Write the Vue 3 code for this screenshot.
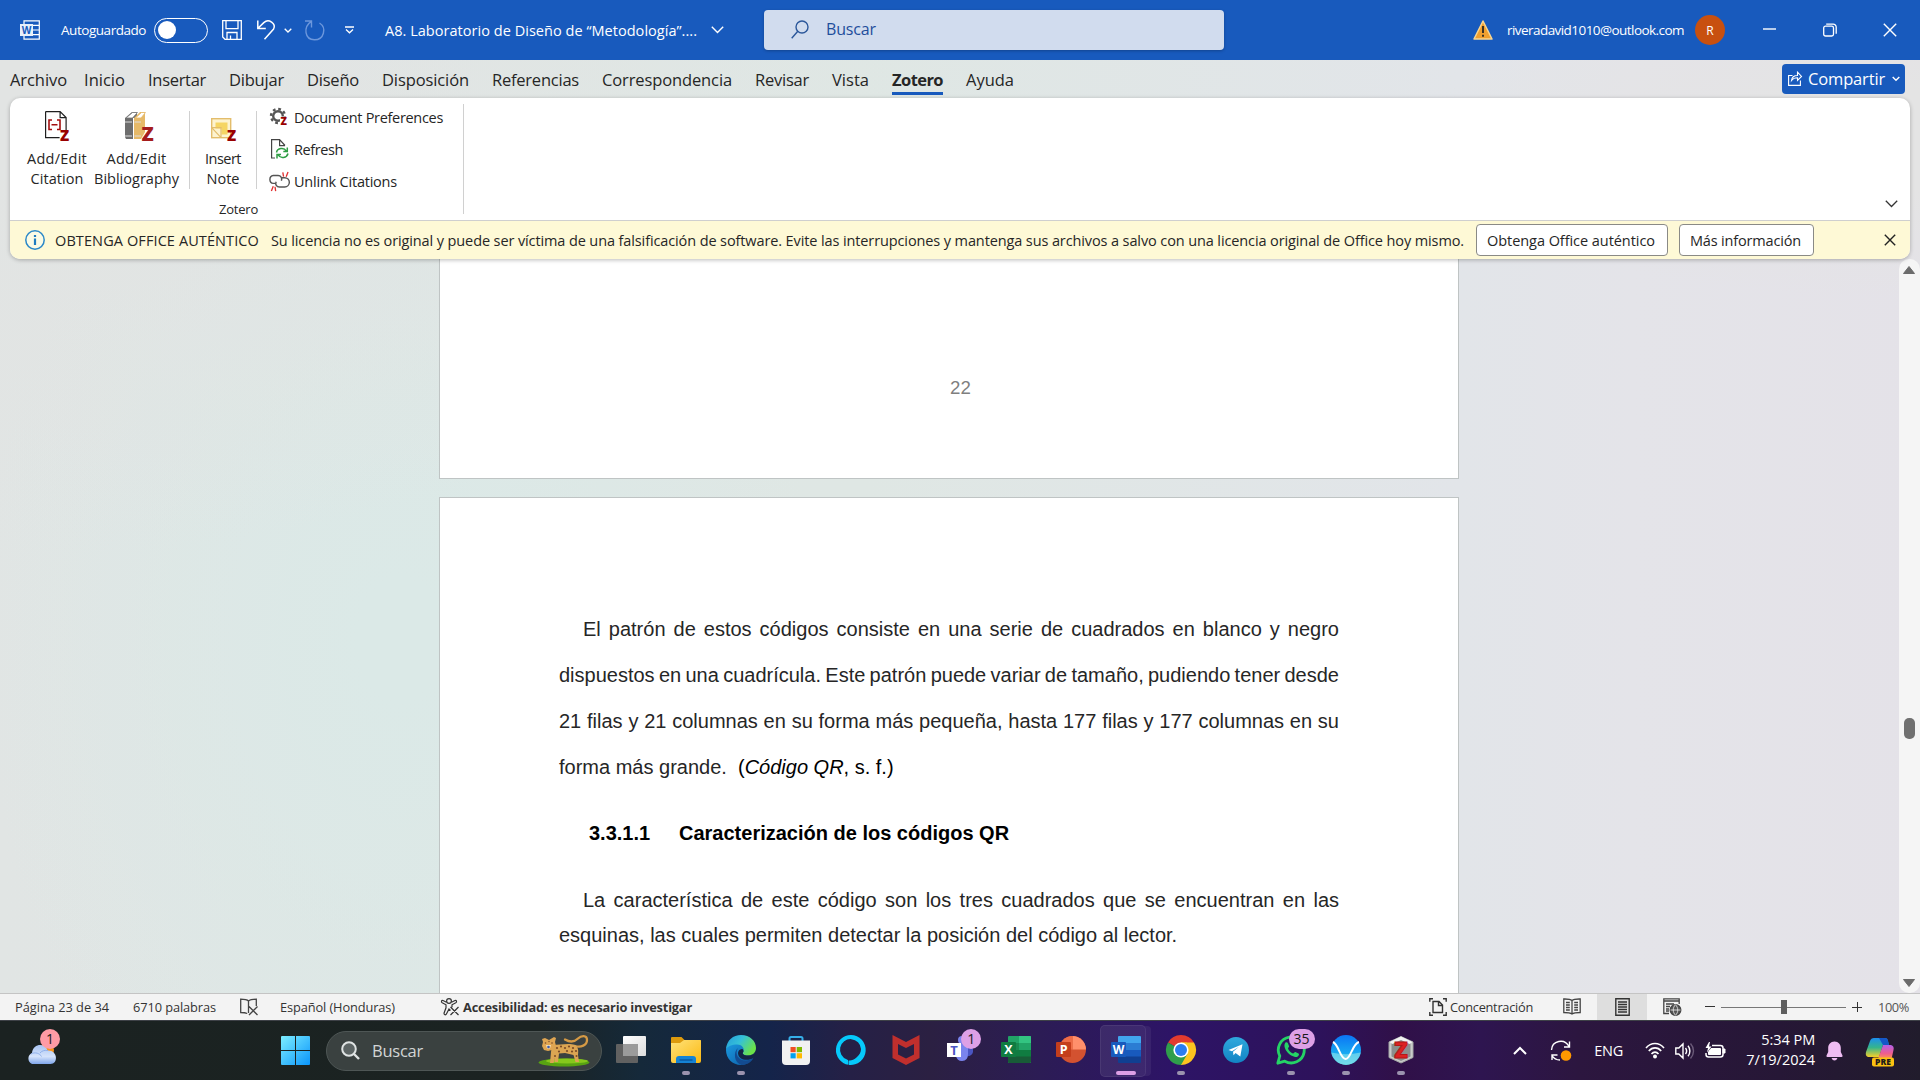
<script setup>
// Sets a text run to a fixed advance width by spreading the difference over its letters.
const vFit = {
  mounted(el, { value }) {
    const natural = el.getBoundingClientRect().width
    const count = el.textContent.length
    el.style.letterSpacing = `${(value - natural) / count}px`
    el.style.width = `${value}px`
  },
}

const tabs = [
  { label: 'Archivo', width: 57, file: true },
  { label: 'Inicio', width: 41 },
  { label: 'Insertar', width: 58 },
  { label: 'Dibujar', width: 55 },
  { label: 'Diseño', width: 52 },
  { label: 'Disposición', width: 87 },
  { label: 'Referencias', width: 87 },
  { label: 'Correspondencia', width: 130 },
  { label: 'Revisar', width: 54 },
  { label: 'Vista', width: 37 },
  { label: 'Zotero', width: 51, active: true },
  { label: 'Ayuda', width: 48 },
]
</script>

<template>
  <div class="screen">
    <header class="titlebar">
      <svg class="word-mark" width="20" height="20" viewBox="0 0 20 20" fill="none" stroke="#fff" stroke-width="1.2">
        <path d="M4 4V.8h15.3v18.4H4V16M13 5.4h6.3M13 10h6.3M13 14.6h6.3" />
        <rect x="0" y="4" width="13" height="12" fill="#e8effa" stroke="none" />
        <text x="6.5" y="13.6" text-anchor="middle" font-size="10" font-weight="700" fill="#185abd" stroke="none">W</text>
      </svg>
      <span v-fit="85" class="autosave">Autoguardado</span>
      <span class="toggle"><i></i></span>
      <svg class="save" width="20" height="20" viewBox="0 0 20 20" fill="none" stroke="#fff" stroke-width="1.3">
        <path d="M.7.7h18.6v18.6H3L.7 17zM4 .7v8h12v-8M5 19v-6.500h10V19M8.500 19v-3.500" />
      </svg>
      <svg class="undo" width="18" height="20" viewBox="0 0 18 20" fill="none" stroke="#fff" stroke-width="1.5">
        <path d="M.8 .5v8h8M1 8.300 6.800 2.600c5-4.500 12.500 1 9.800 6.400L7.500 19.300" />
      </svg>
      <svg class="undo-more" width="8" height="5" viewBox="0 0 8 5" fill="none" stroke="#fff" stroke-width="1.300"><path d="M.7.7 4 4 7.300.7" /></svg>
      <svg class="redo" width="21" height="21" viewBox="0 0 21 21" fill="none" stroke="#6c97dc" stroke-width="1.400">
        <path d="M1 1h6.500v6.500M7.300 1.300C-1 7 .5 19.800 10.500 19.800c9.500 0 12.500-12 5-16.800" />
      </svg>
      <svg class="qat" width="9" height="8" viewBox="0 0 9 8" fill="none" stroke="#fff" stroke-width="1.300"><path d="M0 1h9M1 3.500l3.500 3.300L8 3.500" /></svg>
      <span v-fit="312" class="doc-title">A8. Laboratorio de Diseño de “Metodología”....</span>
      <svg class="title-more" width="13" height="8" viewBox="0 0 13 8" fill="none" stroke="#fff" stroke-width="1.400"><path d="M.8.8l5.700 5.700L12.200.8" /></svg>
      <div class="search">
        <svg width="18" height="19" viewBox="0 0 18 19" fill="none" stroke="#2b579a" stroke-width="1.400">
          <circle cx="11" cy="7" r="6" /><path d="M6.800 11.300.7 18.300" />
        </svg>
        <span v-fit="50">Buscar</span>
      </div>
      <svg class="warning" width="20" height="20" viewBox="0 0 20 20">
        <path d="M10 1 19 19H1z" fill="#f0a030" stroke="#f8d590" stroke-width="1.500" stroke-linejoin="round" />
        <path d="M10 6v7M10 14.800v2" stroke="#3b3224" stroke-width="2" />
      </svg>
      <span v-fit="177" class="account">riveradavid1010@outlook.com</span>
      <span class="avatar">R</span>
      <svg class="win-min" width="13" height="14" viewBox="0 0 13 14" stroke="#fff" stroke-width="1.400"><path d="M0 6h13" /></svg>
      <svg class="win-max" width="14" height="14" viewBox="0 0 14 14" fill="none" stroke="#fff" stroke-width="1.300">
        <rect x=".7" y="3.200" width="9.800" height="9.800" rx="1.800" /><path d="M3.200 1.200h7a3 3 0 0 1 3 3v6.500" />
      </svg>
      <svg class="win-close" width="14" height="14" viewBox="0 0 14 14" stroke="#fff" stroke-width="1.400"><path d="M.8.8l12.400 12.400M13.200.8.8 13.200" /></svg>
    </header>

    <nav class="tabs">
      <span v-for="tab in tabs" :key="tab.label" class="tab" :class="{ active: tab.active, file: tab.file }">
        <span v-fit="tab.width">{{ tab.label }}</span>
      </span>
      <button class="share">
        <svg width="14" height="15" viewBox="0 0 14 15" fill="none" stroke="#fff" stroke-width="1.100">
          <path d="M4.500 4.500H.6v9.900h11.800V9.500M3.500 9.500c.5-4 3-5 6-5V1.200l4 4.300-4 4V6.800c-3 0-4.500.7-6 2.700z" />
        </svg>
        <span v-fit="77">Compartir</span>
        <svg class="share-more" width="8" height="6" viewBox="0 0 8 6" fill="none" stroke="#fff" stroke-width="1.400"><path d="M.7 1 4 4.300 7.300 1" /></svg>
      </button>
    </nav>

    <section class="ribbon-card">
      <div class="ribbon">
        <div class="group">
          <div class="commands">
            <div class="big cite">
              <svg width="26" height="32" viewBox="0 0 26 32" fill="none">
                <path d="M1.600 1.600h14.500l6 6V20M1.600 1.600v26h14M16.100 1.600v6h6" stroke="#1f1f1f" stroke-width="1.200" />
                <path d="M8 10H5v9.500h3M13 10h3v9.500h-3M7.500 14.800h6" stroke="#a30f0f" stroke-width="1.600" />
                <text x="16" y="31" font-size="15" font-weight="800" fill="#990000">Z</text>
              </svg>
              <span v-fit="60">Add/Edit</span><span v-fit="53">Citation</span>
            </div>
            <div class="big biblio">
              <svg width="28" height="32" viewBox="0 0 28 32">
                <path d="M0 8 7 2h5v22l-4 5H1L0 27z" fill="#6d6d6d" />
                <path d="M1 8 7.500 2.500h5L7.500 8z" fill="#fff" stroke="#777" stroke-width=".8" />
                <path d="M9 8l6-6h5v20l-4 7H9z" fill="#e6b968" />
                <path d="M10.500 8l6-5.500h4L16 8z" fill="#fff" stroke="#e6b968" stroke-width=".8" />
                <path d="M0 12h7M0 26h7M9.500 12H16M9.500 26H16" stroke="#ddd" stroke-width="1" />
                <path d="M8.500 8v21" stroke="#fff" stroke-width="1" />
                <text x="16.500" y="31" font-size="20" font-weight="800" fill="#a51c1c">Z</text>
              </svg>
              <span v-fit="60">Add/Edit</span><span v-fit="85">Bibliography</span>
            </div>
            <div class="rule"></div>
            <div class="big note">
              <svg width="25" height="32" viewBox="0 0 25 32" fill="none">
                <rect x=".7" y="8.700" width="19" height="19" fill="#fdf3d0" stroke="#e3bd6c" stroke-width="1.400" />
                <path d="M4.500 12.500h12v12h-6v-6h-6z" fill="#f5d564" />
                <path d="M.7 17.700h9.300v10M.7 17.700l9.300 10" stroke="#e3bd6c" stroke-width="1.200" />
                <text x="16" y="31" font-size="15" font-weight="800" fill="#990000">Z</text>
              </svg>
              <span v-fit="36">Insert</span><span v-fit="33">Note</span>
            </div>
            <div class="rule"></div>
            <div class="small-list">
              <div class="small">
                <svg width="20" height="20" viewBox="0 0 20 20" fill="none">
                  <circle cx="9" cy="9" r="4.800" stroke="#555" stroke-width="2.400" />
                  <circle cx="9" cy="9" r="7" stroke="#555" stroke-width="2.400" stroke-dasharray="2.750 2.750" />
                  <rect x="11" y="9.500" width="7" height="9" fill="#fff" />
                  <text x="11.500" y="18" font-size="10.500" font-weight="800" fill="#990000">Z</text>
                </svg>
                <span v-fit="149">Document Preferences</span>
              </div>
              <div class="small">
                <svg width="20" height="20" viewBox="0 0 20 20" fill="none">
                  <path d="M6 19H2.600V.7h8L16 6.500M10.600.7v6H16" stroke="#444" stroke-width="1.200" />
                  <path d="M7.500 13.500c.8-4.500 7.500-5.500 9.800-1.500M18.300 8.500v4h-4M19 14.500c-1 4.500-7.500 5.500-9.800 1.500M8 19.500v-4h4" stroke="#2f9e44" stroke-width="1.500" />
                </svg>
                <span v-fit="49">Refresh</span>
              </div>
              <div class="small">
                <svg width="21" height="21" viewBox="0 0 21 21" fill="none">
                  <path d="M7 12.500H4.500a4.200 4.200 0 0 1 0-8.300h5c3 0 4.500 3 3.500 5.500M13 6.500h3.500a4.800 4.800 0 0 1 0 9.700H11c-3 0-4.800-2.500-3.500-5.500" stroke="#555" stroke-width="1.500" />
                  <path d="M14.500 1l.8 4.500M20 .5l-2 5M2.500 20.500l2-5M7 20.500 6.300 16" stroke="#e03131" stroke-width="1.400" />
                </svg>
                <span v-fit="103">Unlink Citations</span>
              </div>
            </div>
          </div>
          <div class="group-name"><span v-fit="39">Zotero</span></div>
        </div>
        <div class="group-rule"></div>
        <svg class="collapse" width="13" height="8" viewBox="0 0 13 8" fill="none" stroke="#333" stroke-width="1.300"><path d="M.8.8l5.700 5.700L12.200.8" /></svg>
      </div>
      <div class="notice">
        <svg width="20" height="20" viewBox="0 0 20 20" fill="none">
          <circle cx="10" cy="10" r="9.200" stroke="#2b88c8" stroke-width="1.500" fill="#fafbe6" />
          <path d="M10 8.500v6.500M10 5v2" stroke="#1e7cc0" stroke-width="2.200" />
        </svg>
        <span v-fit="204" class="notice-title">OBTENGA OFFICE AUTÉNTICO</span>
        <span v-fit="1193" class="notice-text">Su licencia no es original y puede ser víctima de una falsificación de software. Evite las interrupciones y mantenga sus archivos a salvo con una licencia original de Office hoy mismo.</span>
        <button class="notice-btn buy"><span v-fit="168">Obtenga Office auténtico</span></button>
        <button class="notice-btn info"><span v-fit="111">Más información</span></button>
        <svg class="notice-close" width="12" height="12" viewBox="0 0 12 12" stroke="#222" stroke-width="1.400"><path d="M.8.8l10.400 10.400M11.200.8.8 11.200" /></svg>
      </div>
    </section>

    <main class="workspace">
      <div class="pages">
        <article class="page page-end"><span class="page-number">22</span></article>
        <article class="page page-next">
          <p class="double">
            <span class="line indent">El patrón de estos códigos consiste en una serie de cuadrados en blanco y negro</span>
            <span class="line tight">dispuestos en una cuadrícula. Este patrón puede variar de tamaño, pudiendo tener desde</span>
            <span class="line">21 filas y 21 columnas en su forma más pequeña, hasta 177 filas y 177 columnas en su</span>
            <span class="line last">forma más grande.&nbsp; <b>(<i>Código QR</i>, s. f.)</b></span>
          </p>
          <h4><span class="number">3.3.1.1</span>Caracterización de los códigos QR</h4>
          <p class="single">
            <span class="line indent">La característica de este código son los tres cuadrados que se encuentran en las</span>
            <span class="line last">esquinas, las cuales permiten detectar la posición del código al lector.</span>
          </p>
        </article>
      </div>
      <div class="scrollbar">
        <svg width="12" height="8" viewBox="0 0 12 8"><path d="M6 .5 11.500 7.500H.5z" fill="#6b6b6b" stroke="#6b6b6b" stroke-linejoin="round" /></svg>
        <i class="thumb"></i>
        <svg width="12" height="8" viewBox="0 0 12 8"><path d="M6 7.500 11.500.5H.5z" fill="#6b6b6b" stroke="#6b6b6b" stroke-linejoin="round" /></svg>
      </div>
    </main>

    <footer class="status">
      <span v-fit="94" class="st-page">Página 23 de 34</span>
      <span v-fit="83" class="st-words">6710 palabras</span>
      <svg class="st-proof" width="18" height="18" viewBox="0 0 18 18" fill="none" stroke="#444" stroke-width="1.300">
        <path d="M8.500 15V3C7 1.500 4 1.200.7 1.200V14.500c3 0 5 .2 6.500 1M8.500 3C10 1.500 13 1.200 16.300 1.200V8M9 8.500l8.500 8.500M17.500 8.500 9 17" />
      </svg>
      <span v-fit="115" class="st-lang">Español (Honduras)</span>
      <svg class="st-acc" width="18" height="18" viewBox="0 0 18 18" fill="none" stroke="#333" stroke-width="1.200">
        <circle cx="8" cy="3" r="2.400" />
        <path d="M5.500 4.300 2 2.500C.5 2-.2 4 1.200 4.800L5 6.800v3L3 15.200c-.3 1.500 1.700 2.200 2.400.8L8 11l1.500 1.500M10.500 4.300 14 2.500c1.500-.5 2.200 1.500.8 2.300L11 6.800v2.500M9.500 9l8 8M17.500 9l-8 8" />
      </svg>
      <span v-fit="229" class="st-acc-text">Accesibilidad: es necesario investigar</span>
      <svg class="st-focus" width="18" height="18" viewBox="0 0 18 18" fill="none" stroke="#333" stroke-width="1.400">
        <path d="M4 .8H.8v3M14 .8h3.200v3M.8 14v3.200H4M17.200 14v3.200H14M4 3.500h6l3.500 3.500v7.500H4zM9.500 3.500v4h4" />
      </svg>
      <span v-fit="83" class="st-focus-text">Concentración</span>
      <svg class="st-read" width="18" height="17" viewBox="0 0 18 17" fill="none" stroke="#444" stroke-width="1.300">
        <path d="M9 2.500v13.500M9 2.500C7 .8 3.500 1 .8 1v13.500c3 0 6.200 0 8.200 1.500 2-1.500 5.200-1.500 8.200-1.500V1C14.500 1 11 .8 9 2.500zM3 4.500h3.800M3 7h3.800M3 9.500h3.800M3 12h3.800M11.200 4.500H15M11.200 7H15M11.200 9.500H15M11.200 12H15" />
      </svg>
      <span class="st-print">
        <svg width="15" height="18" viewBox="0 0 15 18" fill="none" stroke="#333" stroke-width="1.400">
          <path d="M.8.8h13.400v16.400H.8zM3 4h9M3 6.500h9M3 9h9M3 11.500h9M3 14h9" />
        </svg>
      </span>
      <svg class="st-web" width="19" height="18" viewBox="0 0 19 18" fill="none" stroke="#444" stroke-width="1.300">
        <path d="M6 15.500H.8V.8h15.400V6M.8 3h15.400M3 6h8M3 8.500h4M3 11h3M3 13h3" />
        <circle cx="12.500" cy="12" r="5.300" fill="#555" /><path d="M7.500 12h10M12.500 6.700c-3 3-3 7.500 0 10.600 3-3 3-7.500 0-10.600" stroke="#eee" stroke-width=".8" />
      </svg>
      <i class="minus"></i>
      <div class="slider"><i></i></div>
      <i class="plus"></i>
      <span v-fit="31" class="zoom-value">100%</span>
    </footer>

    <div class="taskbar">
      <div class="weather">
        <svg width="32" height="24" viewBox="0 0 32 24">
          <defs><linearGradient id="cloud" x1="0" y1="0" x2="0" y2="1"><stop offset="0" stop-color="#a8c4f2" /><stop offset=".6" stop-color="#d5e3fb" /><stop offset="1" stop-color="#7fa6ea" /></linearGradient></defs>
          <circle cx="22" cy="8" r="7" fill="#f7941d" />
          <path d="M7 22a6 6 0 0 1 0-11C8 1.500 20 .5 22.500 8.500 33 8 33.500 22 25.500 22z" fill="url(#cloud)" />
          <path d="M6 12c4-2.500 9-.5 10.500 2.500M15 11c2-2.500 5-3 8-2.500" fill="none" stroke="#8fb0ea" stroke-width="1" />
        </svg>
        <b class="badge pink">1</b>
      </div>
      <svg class="start" width="29" height="29" viewBox="0 0 29 29">
        <defs><linearGradient id="win" gradientUnits="userSpaceOnUse" x1="0" y1="0" x2="29" y2="29"><stop offset="0" stop-color="#7deeff" /><stop offset="1" stop-color="#0a95fb" /></linearGradient></defs>
        <path d="M0 1q0-1 1-1h13v14H0zM15 0h13q1 0 1 1v13H15zM0 15h14v14H1q-1 0-1-1zM15 15h14v13q0 1-1 1H15z" fill="url(#win)" />
      </svg>
      <div class="tb-search">
        <svg width="19" height="19" viewBox="0 0 19 19" fill="none" stroke="#dfe3e3" stroke-width="2"><circle cx="8" cy="8" r="6.800" fill="#5c6464" /><path d="M13 13l5 5" stroke-width="2.400" /></svg>
        <span v-fit="51">Buscar</span>
        <svg class="leopard" width="52" height="33" viewBox="0 0 52 33">
          <ellipse cx="26" cy="28.500" rx="25.500" ry="4" fill="#58a312" />
          <ellipse cx="29" cy="27" rx="21" ry="2.500" fill="#86c81c" />
          <path d="M37 12c6 2 12-1 12-6 0-5.500-6-4.500-9-1.500-4 4-8 4-13 1" fill="none" stroke="#d59a45" stroke-width="2.300" stroke-linecap="round" />
          <path d="M14 11c8 0 17-2 23 0 3.500 2 3.500 6 3 10l1 7h-3.500l-2-7-8.500-2-6 .5-1 8.500h-3.500l.5-4-1.500 5h-3.500l1-11z" fill="#dba552" />
          <path d="M4 5l3-1 4 2 5-3 2 1-1 4 1 4-4 4-4 1-4-1-2-4 1-4z" fill="#dfa552" />
          <path d="M8 11h5l-1 3.500H9z" fill="#f2dfbc" /><circle cx="10.500" cy="13" r="1.300" fill="#3c5aa8" />
          <g fill="#7a4a27"><circle cx="19" cy="14" r="1.100" /><circle cx="23" cy="12.500" r="1.100" /><circle cx="27" cy="14" r="1.100" /><circle cx="31" cy="12.500" r="1.100" /><circle cx="35" cy="14" r="1.100" /><circle cx="21" cy="17.500" r="1.100" /><circle cx="29" cy="17" r="1.100" /><circle cx="34" cy="17.500" r="1.100" /><circle cx="38" cy="17" r="1.100" /><circle cx="17" cy="22" r="1" /><circle cx="38.500" cy="22" r="1" /><circle cx="7.500" cy="9" r=".8" /><circle cx="14" cy="9" r=".8" /><circle cx="11" cy="7.500" r=".7" /></g>
        </svg>
      </div>

      <ul class="apps">
        <li>
          <svg width="30" height="30" viewBox="0 0 30 30">
            <defs><linearGradient id="tv" x1="0" y1="0" x2="1" y2="1"><stop offset="0" stop-color="#fff" /><stop offset="1" stop-color="#dcdcdc" /></linearGradient></defs>
            <rect x="0" y="9" width="22" height="19" rx="1" fill="#616161" /><rect x="7" y="1" width="23" height="20" rx="1" fill="url(#tv)" /><path d="M7 9h15v12H7z" fill="#9b9b9b" />
          </svg>
        </li>
        <li class="running">
          <svg width="30" height="30" viewBox="0 0 30 30">
            <defs><linearGradient id="folder" x1="0" y1="0" x2="1" y2="1"><stop offset="0" stop-color="#ffe27a" /><stop offset="1" stop-color="#fbb911" /></linearGradient></defs>
            <path d="M0 3q0-1 1-1h9.500l3 3H29q1 0 1 1v7H0z" fill="#dd9a0d" /><path d="M0 8h9l4-3h16q1 0 1 1v20q0 2-2 2H2q-2 0-2-2z" fill="url(#folder)" />
            <path d="M5 28v-4q0-3 3-3h14q3 0 3 3v4z" fill="#1583d4" /><path d="M8.500 25h13" stroke="#0a569e" stroke-width="1.400" />
          </svg>
        </li>
        <li class="running">
          <svg width="30" height="30" viewBox="0 0 30 30">
            <defs>
              <linearGradient id="edge-a" x1="0" y1="0" x2="1" y2=".5"><stop offset="0" stop-color="#249cdc" /><stop offset=".5" stop-color="#35c1d8" /><stop offset="1" stop-color="#6be34a" /></linearGradient>
              <linearGradient id="edge-b" x1="0" y1="0" x2="1" y2="1"><stop offset="0" stop-color="#1b9de2" /><stop offset="1" stop-color="#0c59a4" /></linearGradient>
            </defs>
            <path d="M0 15C0 10 5 6 11 7c5 .5 8 4 7 8l-1 2.500c-1 1.500 1 3 5 3 2.500 0 5-.8 7-2C27 26 21 30 15 30 6.500 30 0 23.500 0 15z" fill="url(#edge-b)" />
            <path d="M0 14C1 5 7 0 15 0c9 0 15 6 15 13 0 5-4 7.500-8 7.500-4 0-6-1.500-5-3 2-3 0-8-6-8C6 9.500 1.500 11.500 0 14z" fill="url(#edge-a)" />
            <path d="M12 13c-4 6 1 13 8 12.500 3 0 5.500-1 7.500-2.500C24.500 28 20 30 15.500 30 8 28 7 17 12 13z" fill="#134b91" />
            <path d="M17 17.500c-1 1.500 1 3 5 3 3.500 0 6.500-1.500 7.500-3 .5 2-.5 4-2 5.500-5 3-15 3-15.500-5 0-2 2-4.500 4.500-4 1 1 1.200 2.500.5 3.500z" fill="#142545" />
          </svg>
        </li>
        <li>
          <svg width="30" height="30" viewBox="0 0 30 30">
            <path d="M8.500 6V3.500Q8.500 2 10 2h10q1.500 0 1.500 1.500V6" fill="none" stroke="#35aee8" stroke-width="2" />
            <path d="M1 5.500h28V26q0 4-4 4H5q-4 0-4-4z" fill="#f1f1f1" />
            <path d="M9.500 12h5.200v5.200H9.500z" fill="#f04e23" /><path d="M15.700 12H21v5.200h-5.300z" fill="#7fba00" /><path d="M9.500 18.200h5.200v5.200H9.500z" fill="#00a1f1" /><path d="M15.700 18.200H21v5.200h-5.300z" fill="#ffb900" />
          </svg>
        </li>
        <li>
          <svg width="30" height="30" viewBox="0 0 30 30"><path fill-rule="evenodd" d="M15 0a15 15 0 1 1-2 29.900v-4.500c3 1 12-4 12-11.400a10.500 10.500 0 1 0-14 10.500q1.500.5 1.500 2v3.300A15 15 0 0 1 15 0z" fill="#06c9fb" /></svg>
        </li>
        <li>
          <svg width="28" height="30" viewBox="0 0 28 30"><path fill-rule="evenodd" d="M.5 0 14 7 27.500 0v23L14 30 .5 23zM6 9v10.500l8 4 8-4V9l-8 4z" fill="#c02f2d" /></svg>
        </li>
        <li class="teams">
          <svg width="28" height="30" viewBox="0 0 28 30">
            <path d="M14 6h12v11q-1 5-8 4z" fill="#4a55c2" /><path d="M10 9h11v10q0 7-6 7-5 0-6-5z" fill="#7a84ee" /><circle cx="15" cy="5" r="4" fill="#7a84ee" />
            <rect x="0" y="8" width="14" height="14" fill="#fff" /><text x="7" y="19.500" text-anchor="middle" font-size="13" font-weight="700" fill="#4b56c5">T</text>
          </svg>
          <b class="badge">1</b>
        </li>
        <li>
          <svg width="30" height="30" viewBox="0 0 30 30">
            <path d="M8 1h21q1 0 1 1v26H8q-1 0-1-1V2q0-1 1-1z" fill="#21a366" /><path d="M18 1h11q1 0 1 1v6H18z" fill="#33c481" /><path d="M7 8h11v7H7z" fill="#1a8a50" /><path d="M7 15h11v7H7zM18 15h12v7H18z" fill="#107c41" /><path d="M7 21.500h23V27q0 1-1 1H8q-1 0-1-1z" fill="#185c37" />
            <rect x="0" y="7" width="15" height="15" rx="1" fill="#107c41" /><text x="7.500" y="19" text-anchor="middle" font-size="12.500" font-weight="700" fill="#fff">X</text>
          </svg>
        </li>
        <li>
          <svg width="30" height="30" viewBox="0 0 30 30">
            <circle cx="16.500" cy="14.500" r="13.500" fill="#d35230" /><path d="M16.500 1A13.500 13.500 0 0 1 30 14.500H16.500z" fill="#ff8f6b" /><path d="M3 14.500A13.500 13.500 0 0 1 16.500 1v13.500z" fill="#ed6c47" />
            <rect x="0" y="7" width="15" height="15" rx="1" fill="#c43e1c" /><text x="7.700" y="19" text-anchor="middle" font-size="12.500" font-weight="700" fill="#fff">P</text>
          </svg>
        </li>
        <li class="current">
          <svg width="30" height="30" viewBox="0 0 30 30">
            <path d="M8 1h21q1 0 1 1v6H7V2q0-1 1-1z" fill="#41a5ee" /><path d="M7 8h23v7H7z" fill="#2b7cd3" /><path d="M7 15h23v7H7z" fill="#185abd" /><path d="M7 21.500h23V27q0 1-1 1H8q-1 0-1-1z" fill="#103f91" />
            <rect x="0" y="7" width="15" height="15" rx="1" fill="#185abd" /><text x="7.500" y="19" text-anchor="middle" font-size="12" font-weight="700" fill="#fff">W</text>
          </svg>
        </li>
        <li class="running">
          <svg width="30" height="30" viewBox="0 0 30 30">
            <path d="M15 15 2 7.500A15 15 0 0 1 28 7.500z" fill="#e33b2e" /><path d="M15 15 15 7.500H28A15 15 0 0 1 15 30z" fill="#fcc41f" /><path d="M15 15 21.500 18.700 15 30A15 15 0 0 1 2 7.500z" fill="#2f9e4b" />
            <path d="M15 7.500h6v6z" fill="#fcc41f" /><circle cx="15" cy="15" r="7.600" fill="#fff" /><circle cx="15" cy="15" r="6" fill="#2b7df0" />
          </svg>
        </li>
        <li>
          <svg width="26" height="26" viewBox="0 0 26 26">
            <defs><linearGradient id="tg" x1="0" y1="0" x2="0" y2="1"><stop offset="0" stop-color="#2fa9dd" /><stop offset="1" stop-color="#1284c4" /></linearGradient></defs>
            <circle cx="13" cy="13" r="13" fill="url(#tg)" /><path d="M5.500 13 19.500 7.300 17.300 19.500 12.600 16 10.500 18.200 10 14.800 16 9.800 9 14.200z" fill="#fff" />
          </svg>
        </li>
        <li class="running whatsapp">
          <svg width="30" height="30" viewBox="0 0 30 30" fill="none">
            <path d="M1.800 28.200 3.800 21A13 13 0 1 1 8.800 26.200z" stroke="#25d366" stroke-width="2.800" stroke-linejoin="round" />
            <path d="M9.500 7.500c-4 5 4.500 15 11.500 14.500 2-1 2.500-3 1.500-3.500l-3-1.500c-1-.3-1.500 1.500-2.500 1.500-2-.5-4.500-3-5-5 0-1 1.500-1.500 1-2.500l-1.200-3c-.5-1-1.800-1-2.300-.5z" fill="#25d366" />
          </svg>
          <b class="badge wide">35</b>
        </li>
        <li class="running">
          <svg width="30" height="30" viewBox="0 0 30 30">
            <defs><linearGradient id="wave" x1="0" y1="0" x2="0" y2="1"><stop offset="0" stop-color="#0b74f5" /><stop offset=".6" stop-color="#18a9f2" /><stop offset="1" stop-color="#5fe0e0" /></linearGradient></defs>
            <circle cx="15" cy="15" r="15" fill="url(#wave)" /><path d="M.3 17.500Q15 21 29.700 17.500A15 15 0 0 1 .3 17.500z" fill="#7fdcec" opacity=".7" />
            <path d="M2 7c6 3 7 16.500 12.500 17C20 24 21 9 28 7" fill="none" stroke="#fff" stroke-width="2" />
          </svg>
        </li>
        <li class="running">
          <svg width="26" height="30" viewBox="0 0 26 30">
            <path d="M13 1.500 25 7v15.500L13 28 1 22.500V7z" fill="#c9cbca" stroke="#a3a6a5" /><path d="M13 4 22.500 8.500v13L13 26l-9.500-4.500v-13z" fill="#8b8e8d" /><path d="M1.500 7 13 1.500 24.500 7l-3 2L13 5 4.500 9z" fill="#f2f2f2" />
            <text x="13" y="22.500" text-anchor="middle" font-size="22" font-weight="800" fill="#dc2222" stroke="#b51818" stroke-width="1">Z</text>
          </svg>
        </li>
      </ul>

      <div class="tray">
        <svg class="t-up" width="14" height="9" viewBox="0 0 14 9" fill="none" stroke="#fff" stroke-width="2"><path d="M1 8 7 2l6 6" /></svg>
        <svg class="t-sync" width="22" height="22" viewBox="0 0 22 22" fill="none" stroke="#fff" stroke-width="1.400">
          <path d="M1.500 10C2 .5 14.500-2 19 6.500M19.500 1.500v5.500H14M2 20v-5h5.500M2 15.500c2 3.500 5 4.500 8 4.500" /><circle cx="16" cy="15.500" r="5.300" fill="#ff9800" stroke="none" />
        </svg>
        <span v-fit="29" class="t-lang">ENG</span>
        <svg class="t-wifi" width="20" height="17" viewBox="0 0 20 17" fill="none" stroke="#fff" stroke-width="1.600">
          <path d="M1 6c5-6 13-6 18 0M3.800 9c3.500-4.200 9-4.200 12.400 0M6.500 12c2-2.500 5-2.500 7 0" /><circle cx="10" cy="14.500" r="2" fill="#fff" stroke="none" />
        </svg>
        <svg class="t-vol" width="20" height="18" viewBox="0 0 20 18" fill="none" stroke="#fff" stroke-width="1.400">
          <path d="M.8 6h3L8 2v14l-4.200-4h-3zM10.500 6c1.500 2 1.500 4 0 6M13 3.800c2.500 3 2.500 7.500 0 10.400" /><path d="M15.500 1.500c4 4.500 4 10.500 0 15" stroke="#6a5a78" />
        </svg>
        <svg class="t-bat" width="21" height="17" viewBox="0 0 21 17" fill="none" stroke="#fff" stroke-width="1.500">
          <path d="M7 3.500h8.500q2.500 0 2.500 2.500v6.500q0 2.500-2.500 2.500H3.500Q1 15 1 12.500V11" /><path d="M6 6.500h9.500v6H3.500V10zM18 7h2v4h-2z" fill="#fff" stroke-width="1" /><path d="M4 0 .5 6H3L2 10.500 6.500 4.500H4L5 0z" fill="#fff" stroke="none" />
        </svg>
        <div class="clock"><span v-fit="54">5:34 PM</span><span v-fit="69">7/19/2024</span></div>
        <svg class="t-bell" width="17" height="20" viewBox="0 0 17 20" fill="#efbdf3"><path d="M8.500.5c-4 0-6.300 3-6.300 6.500v4L.5 14.500q-.3 1.500 1 1.500h14q1.300 0 1-1.500L14.800 11V7C14.800 3.500 12.500.5 8.500.5zM5.500 17h6q-1 2.500-3 2.500T5.500 17z" /></svg>
        <svg class="t-copilot" width="30" height="30" viewBox="0 0 30 30">
          <defs>
            <linearGradient id="cp-a" x1="0" y1="0" x2="0" y2="1"><stop offset="0" stop-color="#1c8ef0" /><stop offset=".5" stop-color="#35b58c" /><stop offset="1" stop-color="#f5cf2a" /></linearGradient>
            <linearGradient id="cp-b" x1="0" y1="0" x2="0" y2="1"><stop offset="0" stop-color="#b260ea" /><stop offset=".6" stop-color="#ee5d8e" /><stop offset="1" stop-color="#fb9a4c" /></linearGradient>
          </defs>
          <path d="M9 1h11q2.500 0 3 3l1 4h-6l-4 12H3q-3-1-2-5L5 4q1-3 4-3z" fill="url(#cp-a)" /><path d="M14 1h6q2.500 0 3 3l1 4h-6z" fill="#1557c8" />
          <path d="M18 8h8q3.500 1 2.500 5l-2 9H13z" fill="url(#cp-b)" />
          <rect x="7" y="20.500" width="22" height="9" rx="2" fill="#fcc211" /><text x="18" y="28" text-anchor="middle" font-size="8.500" font-weight="800" fill="#1b1b1b">PRE</text>
        </svg>
      </div>
    </div>
  </div>
</template>

<style>
body { margin: 0; }
</style>

<style scoped>
* { box-sizing: border-box; }
.screen {
  width: 1920px; height: 1080px; overflow: hidden; display: flex; flex-direction: column;
  font-family: "Open Sans", "Noto Sans", sans-serif; color: #262626;
  background:
    radial-gradient(500px 160px at 1920px 140px, #e4e4e4 30%, transparent),
    radial-gradient(900px 500px at 0 60px, #e2e4e3 20%, transparent),
    radial-gradient(420px 600px at 400px 640px, #dbe9e7 10%, transparent),
    linear-gradient(90deg, #e1e5e4 0%, #dfe7e5 25%, #dfe7e4 45%, #e2e5e9 76%, #e4e4e9 85%, #e4e2e8 100%);
}
svg { flex: none; display: block; overflow: visible; }
span { white-space: nowrap; }
[class] > span, header > span { flex: none; }
button { font: inherit; padding: 0; border: 0; }

.titlebar { height: 60px; flex: none; background: #185abd; color: #fff; display: flex; align-items: center; padding-left: 20px; }
.autosave { margin-left: 21px; font-size: 13.500px; }
.toggle { width: 54px; height: 25px; margin-left: 8px; border: 1.500px solid #fff; border-radius: 13px; display: flex; align-items: center; padding-left: 3px; }
.toggle i { width: 18px; height: 18px; border-radius: 50%; background: #fff; }
.save { margin-left: 14px; }
.undo { margin-left: 15px; }
.undo-more { margin-left: 9px; }
.redo { margin-left: 12px; }
.qat { margin-left: 20px; }
.doc-title { margin-left: 31px; font-size: 14.500px; }
.title-more { margin-left: 14px; }
.search { width: 460px; height: 40px; margin-left: 40px; border-radius: 4px; background: #d1dcee; box-shadow: 0 1px 3px rgba(0,0,0,.25); color: #1f4e9c; display: flex; align-items: center; padding: 0 0 2px 27px; gap: 17px; font-size: 16px; }
.warning { margin-left: 249px; }
.account { margin-left: 14px; font-size: 13.500px; }
.avatar { width: 30px; height: 30px; margin-left: 11px; border-radius: 50%; background: #c8500f; display: flex; align-items: center; justify-content: center; font-size: 12px; }
.win-min { margin-left: 38px; }
.win-max { margin-left: 47px; }
.win-close { margin-left: 46px; }

.tabs { height: 38px; flex: none; display: flex; padding-left: 10px; gap: 23px; font-size: 16.500px; }
.tab { display: flex; flex-direction: column; height: 35px; padding-top: 8px; line-height: 23px; }
.tab.file { margin-right: -6px; }
.tab.active { font-weight: 700; border-bottom: 3px solid #185abd; }
.share { width: 123px; height: 30px; margin: 4px 15px 0 auto; border-radius: 4px; background: #185abd; color: #fff; display: flex; align-items: center; padding: 0 0 1px 6px; gap: 6px; font-size: 16.500px; }
.share-more { margin-left: 1px; }

.ribbon-card { width: 1900px; height: 161px; margin: 0 10px; flex: none; border-radius: 10px; background: #fff; box-shadow: 0 1px 4px rgba(0,0,0,.28); overflow: hidden; z-index: 1; }
.ribbon { height: 123px; border-bottom: 1px solid #cfcfcf; display: flex; font-size: 14.500px; }
.group { width: 453px; display: flex; flex-direction: column; padding-left: 10px; }
.commands { display: flex; height: 102px; }
.big { display: flex; flex-direction: column; align-items: center; padding-top: 12px; line-height: 20px; }
.big svg { margin-bottom: 7px; }
.cite { width: 74px; }
.biblio { width: 85px; margin-right: 10px; }
.biblio svg { margin-left: 5px; }
.note { width: 66px; }
.rule { width: 1px; height: 78px; margin-top: 13px; background: #d0d0d0; }
.small-list { display: flex; flex-direction: column; padding: 3px 0 0 12px; }
.small { height: 32px; display: flex; align-items: center; gap: 5px; }
.small svg { width: 20px; }
.group-name { text-align: center; width: 437px; height: 18px; line-height: 18px; font-size: 13px; }
.group-rule { width: 1px; height: 110px; margin-top: 6px; background: #d0d0d0; }
.collapse { margin: 102px 12px 0 auto; }
.notice { height: 38px; background: #fef9d6; display: flex; align-items: center; padding-left: 15px; font-size: 14.500px; }
.notice-title { margin-left: 10px; font-weight: 500; }
.notice-text { margin-left: 12px; }
.notice-btn { height: 32px; border: 1px solid #8a8a86; border-radius: 4px; background: #fff; display: flex; align-items: center; justify-content: center; padding-right: 2px; color: #262626; }
.buy { width: 192px; margin-left: 12px; }
.info { width: 135px; margin-left: 11px; }
.notice-close { margin-left: auto; margin-right: 14px; }

.workspace { height: 734px; flex: none; display: flex; overflow: hidden; }
.pages { width: 1020px; margin-left: 439px; font-family: "Liberation Sans", sans-serif; }
.page { background: #fff; border: 1px solid #bfc4c4; }
.page-end { height: 220px; border-top: 0; padding: 118px 0 0 2px; text-align: center; font-size: 18.700px; line-height: 22px; color: #7f7f7f; }
.page-number { margin-left: 21px; }
.page-next { height: 520px; margin-top: 18px; padding: 108px 119px 0 119px; font-size: 20px; }
.page p { margin: 0; color: #262626; }
.double { line-height: 46px; }
.single { line-height: 34.500px; }
.line { display: block; text-align: justify; text-align-last: justify; white-space: normal; }
.line.last { text-align-last: left; }
.line.tight { word-spacing: -2px; }
.line b { font-weight: 400; color: #000; }
.indent { padding-left: 24px; }
h4 { margin: 20px 0 27px; padding-left: 30px; font-size: 20px; line-height: 46px; color: #000; display: flex; }
.number { width: 90px; }
.scrollbar { width: 21px; margin-left: auto; border-radius: 10px; background: #f5f5f5; display: flex; flex-direction: column; align-items: center; padding: 7px 1px 6px 0; }
.thumb { width: 11px; height: 21px; margin: 444px 0 auto; border-radius: 5px; background: #707070; }

.status { height: 27px; flex: none; background: #f3f3f3; border-top: 1px solid #c4c4c4; display: flex; align-items: center; padding: 0 0 1px 15px; font-size: 12.800px; color: #333; }
.st-words { margin-left: 24px; }
.st-proof { margin-left: 24px; }
.st-lang { margin-left: 22px; }
.st-acc { margin-left: 46px; }
.st-acc-text { margin-left: 4px; font-weight: 700; }
.st-focus { margin-left: 737px; }
.st-focus-text { margin-left: 3px; }
.st-read { margin-left: 30px; }
.st-print { width: 50px; height: 26px; margin: 0 16px 0 16px; background: #dedede; display: flex; align-items: center; justify-content: center; }
.minus { width: 10px; height: 1px; margin-left: 23px; background: #333; }
.slider { width: 125px; height: 14px; margin-left: 6px; padding-left: 60px; background: linear-gradient(#777, #777) 0 7px / 100% 1px no-repeat; }
.slider i { display: block; width: 6px; height: 14px; background: #5e5e5e; }
.plus { width: 10px; height: 10px; margin: 0 16px 0 6px; background: linear-gradient(#333, #333) 0 5px / 10px 1px no-repeat, linear-gradient(#333, #333) 5px 0 / 1px 10px no-repeat; }
.zoom-value { color: #555; }

.taskbar {
  height: 60px; flex: none; display: flex; align-items: center; border-top: 1px solid #3e4147; color: #fff;
  background: linear-gradient(90deg, #1b2221 0, #1b2322 540px, #15293a 640px, #14244a 770px, #252046 850px, #2b2042 930px, #2c1c55 1040px, #2d1466 1170px, #2d125b 1320px, #301048 1400px, #2e1550 1480px, #2c163f 1580px, #261736 1780px, #211c2c 1920px);
}
.weather { width: 32px; height: 60px; margin-left: 25px; padding-top: 21px; position: relative; }
.badge { position: absolute; left: 18px; top: 8px; min-width: 20px; height: 20px; border-radius: 10px; background: #dda0e6; color: #1a1a1a; font-weight: 400; font-size: 14px; line-height: 20px; text-align: center; }
.badge.pink { left: 15px; background: #ff9ba5; }
.start { margin-left: 224px; }
.tb-search { width: 276px; height: 40px; margin-left: 16px; border: 1px solid #4e5655; border-radius: 20px; background: #3a4140; display: flex; align-items: center; padding-left: 14px; font-size: 16.500px; color: #d2d5d5; }
.tb-search span { margin-left: 12px; }
.leopard { margin-left: 115px; }
.apps { list-style: none; margin: 0 0 0 1px; padding: 0 0 2px; display: flex; height: 59px; }
.apps li { width: 55.050px; height: 57px; display: flex; flex-direction: column; align-items: center; justify-content: center; position: relative; }
.apps li.running::after, .apps li.current::after { content: ""; position: absolute; bottom: 3px; width: 8px; height: 4px; border-radius: 2px; background: #9b93ae; }
.apps li.current::after { width: 20px; background: #dda0e6; }
.apps li.current::before { content: ""; position: absolute; left: 2px; top: 4px; width: 44px; height: 50px; border-radius: 5px; background: rgba(255,255,255,.08); border: 1px solid rgba(255,255,255,.07); box-shadow: 6px 0 0 -1px rgba(255,255,255,.06); }
.apps li svg { position: relative; }
.teams .badge { left: 28px; }
.badge.wide { left: 25px; width: 26px; }
.tray { display: flex; align-items: center; margin-left: 84.500px; font-size: 14.500px; }
.t-sync { margin-left: 23px; }
.t-lang { margin-left: 22px; }
.t-wifi { margin-left: 22px; }
.t-vol { margin-left: 10px; }
.t-bat { margin-left: 10px; }
.clock { display: flex; flex-direction: column; align-items: flex-end; line-height: 20px; margin: -2px 0 0 20px; }
.t-bell { margin-left: 11px; }
.t-copilot { margin-left: 22px; margin-top: 2px; }
</style>
